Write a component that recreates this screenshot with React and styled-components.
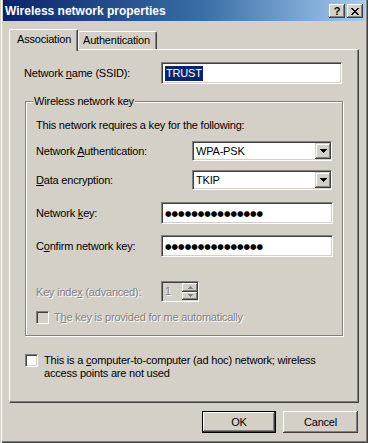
import React from "react";
import styled, { createGlobalStyle } from "styled-components";

const GlobalStyle = createGlobalStyle`
  html, body {
    margin: 0;
    padding: 0;
    background: #d4d0c8;
  }
`;

const Window = styled.div`
  width: 368px;
  height: 443px;
  box-sizing: border-box;
  padding: 0 3px 3px 3px;
  background: #d4d0c8;
  box-shadow: inset 1px 0 0 #d4d0c8, inset 2px 0 0 #fff,
    inset -1px -1px 0 #404040, inset -2px -2px 0 #808080;
  display: flex;
  flex-direction: column;
  font-family: "Liberation Sans", Arial, sans-serif;
  font-size: 11px;
  letter-spacing: -0.2px;
  color: #000;
`;

const TitleBar = styled.div`
  height: 21px;
  box-sizing: border-box;
  padding: 1px 2px 0 2px;
  background: linear-gradient(to right, #0a246a 0%, #3a6ea5 55%, #a6caf0 100%);
  display: flex;
  align-items: center;
`;

const Title = styled.div`
  flex: 1;
  color: #fff;
  font-weight: bold;
  font-size: 12px;
  letter-spacing: 0;
`;

const CaptionButton = styled.div`
  width: 16px;
  height: 14px;
  box-sizing: border-box;
  background: #d4d0c8;
  box-shadow: inset -1px -1px 0 #404040, inset 1px 1px 0 #fff,
    inset -2px -2px 0 #808080;
  display: flex;
  align-items: center;
  justify-content: center;
  font-weight: bold;
  font-size: 11px;
  margin-left: ${(p) => (p.$gap ? "2px" : "0")};
`;

const TabStrip = styled.div`
  margin-top: 8px;
  height: 20px;
  padding-left: 6px;
  display: flex;
  align-items: flex-start;
  position: relative;
  z-index: 1;
`;

const Tab = styled.div`
  box-sizing: border-box;
  height: ${(p) => (p.$active ? "22px" : "18px")};
  margin-top: ${(p) => (p.$active ? "0" : "2px")};
  padding: ${(p) => (p.$active ? "3px 0 0 7px" : "2px 0 0 4px")};
  width: ${(p) => p.$w}px;
  background: #d4d0c8;
  border-top: 1px solid #fff;
  border-left: 1px solid #fff;
  border-right: 1px solid #404040;
  border-radius: 2px 2px 0 0;
  box-shadow: inset -1px 0 0 #808080;
  white-space: nowrap;
`;

const Panel = styled.div`
  margin-left: 6px;
  width: 350px;
  height: 354px;
  box-sizing: border-box;
  background: #d4d0c8;
  border-top: 1px solid #fff;
  border-left: 1px solid #fff;
  border-right: 1px solid #404040;
  border-bottom: 1px solid #404040;
  box-shadow: inset -1px -1px 0 #808080;
  display: flex;
  flex-direction: column;
  padding-left: 14px;
`;

const Row = styled.div`
  display: flex;
  align-items: center;
  height: ${(p) => p.$h || 20}px;
  margin-top: ${(p) => p.$mt || 0}px;
`;

const Label = styled.div`
  width: ${(p) => p.$w}px;
  flex-shrink: 0;
  white-space: nowrap;
  color: ${(p) => (p.$disabled ? "#808080" : "#000")};
  text-shadow: ${(p) => (p.$disabled ? "1px 1px 0 #fff" : "none")};
`;

const Sunken = styled.div`
  box-sizing: border-box;
  width: ${(p) => p.$w}px;
  height: ${(p) => p.$h || 22}px;
  background: ${(p) => (p.$disabled ? "#d4d0c8" : "#fff")};
  border-top: 1px solid #808080;
  border-left: 1px solid #808080;
  border-right: 1px solid #fff;
  border-bottom: 1px solid #fff;
  box-shadow: inset 1px 1px 0 #404040, inset -1px -1px 0 #d4d0c8;
  display: flex;
  align-items: center;
  padding-left: 3px;
`;

const Selected = styled.span`
  background: #0a246a;
  color: #fff;
  padding: 0 1px;
  line-height: 15px;
`;

const Dots = styled.span`
  font-family: "DejaVu Sans", sans-serif;
  font-size: 7.5px;
  letter-spacing: 0;
`;

const GroupBox = styled.div`
  margin-top: 17px;
  margin-left: 1px;
  width: 318px;
  height: 235px;
  box-sizing: border-box;
  border: 1px solid #808080;
  box-shadow: inset 1px 1px 0 #fff, 1px 1px 0 #fff;
  padding-left: 10px;
  display: flex;
  flex-direction: column;
`;

const Legend = styled.div`
  align-self: flex-start;
  margin: -7px 0 0 -3px;
  padding: 0 1px;
  background: #d4d0c8;
  height: 13px;
  line-height: 13px;
`;

const Text = styled.div`
  margin-top: ${(p) => p.$mt || 0}px;
  line-height: 13px;
  color: ${(p) => (p.$disabled ? "#808080" : "#000")};
  text-shadow: ${(p) => (p.$disabled ? "1px 1px 0 #fff" : "none")};
`;

const DropButton = styled.div`
  width: 16px;
  height: 16px;
  box-sizing: border-box;
  margin-left: auto;
  background: #d4d0c8;
  box-shadow: inset -1px -1px 0 #404040, inset 1px 1px 0 #d4d0c8,
    inset -2px -2px 0 #808080, inset 2px 2px 0 #fff;
  display: flex;
  align-items: center;
  justify-content: center;
`;

const SpinBox = styled.div`
  display: flex;
  align-items: stretch;
  height: 21px;
  width: 38px;
`;

const SpinButtons = styled.div`
  width: 16px;
  display: flex;
  flex-direction: column;
  margin-left: -17px;
  margin-top: 2px;
  margin-bottom: 2px;
`;

const SpinButton = styled.div`
  flex: 1;
  background: #d4d0c8;
  box-shadow: inset -1px -1px 0 #404040, inset 1px 1px 0 #fff,
    inset -2px -2px 0 #808080;
  display: flex;
  align-items: center;
  justify-content: center;
`;

const CheckRow = styled.div`
  display: flex;
  align-items: ${(p) => (p.$top ? "flex-start" : "center")};
  margin-top: ${(p) => p.$mt || 0}px;
  margin-left: ${(p) => p.$ml || 0}px;
`;

const CheckBox = styled.div`
  width: 13px;
  height: 13px;
  box-sizing: border-box;
  flex-shrink: 0;
  background: ${(p) => (p.$disabled ? "#d4d0c8" : "#fff")};
  border-top: 1px solid #808080;
  border-left: 1px solid #808080;
  border-right: 1px solid #fff;
  border-bottom: 1px solid #fff;
  box-shadow: inset 1px 1px 0 #404040, inset -1px -1px 0 #d4d0c8;
  margin-right: ${(p) => p.$gap}px;
`;

const ButtonRow = styled.div`
  display: flex;
  justify-content: flex-end;
  gap: 7px;
  margin-top: 8px;
  padding-right: 7px;
`;

const Button = styled.div`
  width: ${(p) => p.$w}px;
  height: 22px;
  box-sizing: border-box;
  background: #d4d0c8;
  display: flex;
  align-items: center;
  justify-content: center;
  border: ${(p) => (p.$default ? "1px solid #000" : "none")};
  box-shadow: inset -1px -1px 0 #404040, inset 1px 1px 0 #fff,
    inset -2px -2px 0 #808080;
`;

const DownArrow = ({ color = "#000" }) => (
  <svg width="7" height="4" viewBox="0 0 7 4">
    <path d="M0 0h7v1H0zM1 1h5v1H1zM2 2h3v1H2zM3 3h1v1H3z" fill={color} />
  </svg>
);

const UpArrow = ({ color = "#000" }) => (
  <svg width="5" height="3" viewBox="0 0 5 3">
    <path d="M2 0h1v1H2zM1 1h3v1H1zM0 2h5v1H0z" fill={color} />
  </svg>
);

const SmallDown = ({ color = "#000" }) => (
  <svg width="5" height="3" viewBox="0 0 5 3">
    <path d="M0 0h5v1H0zM1 1h3v1H1zM2 2h1v1H2z" fill={color} />
  </svg>
);

const CloseGlyph = () => (
  <svg width="8" height="7" viewBox="0 0 8 7">
    <path
      d="M0 0h2v1H0zM6 0h2v1H6zM1 1h2v1H1zM5 1h2v1H5zM2 2h4v1H2zM3 3h2v1H3zM2 4h4v1H2zM1 5h2v1H1zM5 5h2v1H5zM0 6h2v1H0zM6 6h2v1H6z"
      fill="#000"
    />
  </svg>
);

const Select = ({ value }) => (
  <Sunken $w={140} $h={20}>
    <span>{value}</span>
    <DropButton>
      <DownArrow />
    </DropButton>
  </Sunken>
);

const App = () => {
  return (
    <>
      <GlobalStyle />
      <Window>
        <TitleBar>
          <Title>Wireless network properties</Title>
          <CaptionButton>?</CaptionButton>
          <CaptionButton $gap>
            <CloseGlyph />
          </CaptionButton>
        </TitleBar>

        <TabStrip>
          <Tab $active $w={69}>
            Association
          </Tab>
          <Tab $w={79}>Authentication</Tab>
        </TabStrip>

        <Panel>
          <Row $h={22} $mt={12}>
            <Label $w={137}>
              Network <u>n</u>ame (SSID):
            </Label>
            <Sunken $w={181}>
              <Selected>TRUST</Selected>
            </Sunken>
          </Row>

          <GroupBox>
            <Legend>Wireless network key</Legend>
            <Text $mt={11}>This network requires a key for the following:</Text>
            <Row $mt={9}>
              <Label $w={156}>
                Network <u>A</u>uthentication:
              </Label>
              <Select value="WPA-PSK" />
            </Row>
            <Row $mt={9}>
              <Label $w={156}>
                <u>D</u>ata encryption:
              </Label>
              <Select value="TKIP" />
            </Row>
            <Row $h={22} $mt={12}>
              <Label $w={125}>
                Network <u>k</u>ey:
              </Label>
              <Sunken $w={172}>
                <Dots>●●●●●●●●●●●●●●●</Dots>
              </Sunken>
            </Row>
            <Row $h={22} $mt={11}>
              <Label $w={125}>
                C<u>o</u>nfirm network key:
              </Label>
              <Sunken $w={172}>
                <Dots>●●●●●●●●●●●●●●●</Dots>
              </Sunken>
            </Row>
            <Row $h={21} $mt={24}>
              <Label $w={125} $disabled>
                Key inde<u>x</u> (advanced):
              </Label>
              <SpinBox>
                <Sunken $w={38} $h={21} $disabled>
                  <Text $disabled>1</Text>
                </Sunken>
                <SpinButtons>
                  <SpinButton>
                    <UpArrow color="#808080" />
                  </SpinButton>
                  <SpinButton>
                    <SmallDown color="#808080" />
                  </SpinButton>
                </SpinButtons>
              </SpinBox>
            </Row>
            <CheckRow $mt={9}>
              <CheckBox $disabled $gap={5} />
              <Text $disabled>
                T<u>h</u>e key is provided for me automatically
              </Text>
            </CheckRow>
          </GroupBox>

          <CheckRow $top $mt={18} $ml={1}>
            <CheckBox $gap={6} />
            <Text>
              This is a <u>c</u>omputer-to-computer (ad hoc) network; wireless
              <br />
              access points are not used
            </Text>
          </CheckRow>
        </Panel>

        <ButtonRow>
          <Button $w={74} $default>
            OK
          </Button>
          <Button $w={75}>Cancel</Button>
        </ButtonRow>
      </Window>
    </>
  );
};

export default App;
